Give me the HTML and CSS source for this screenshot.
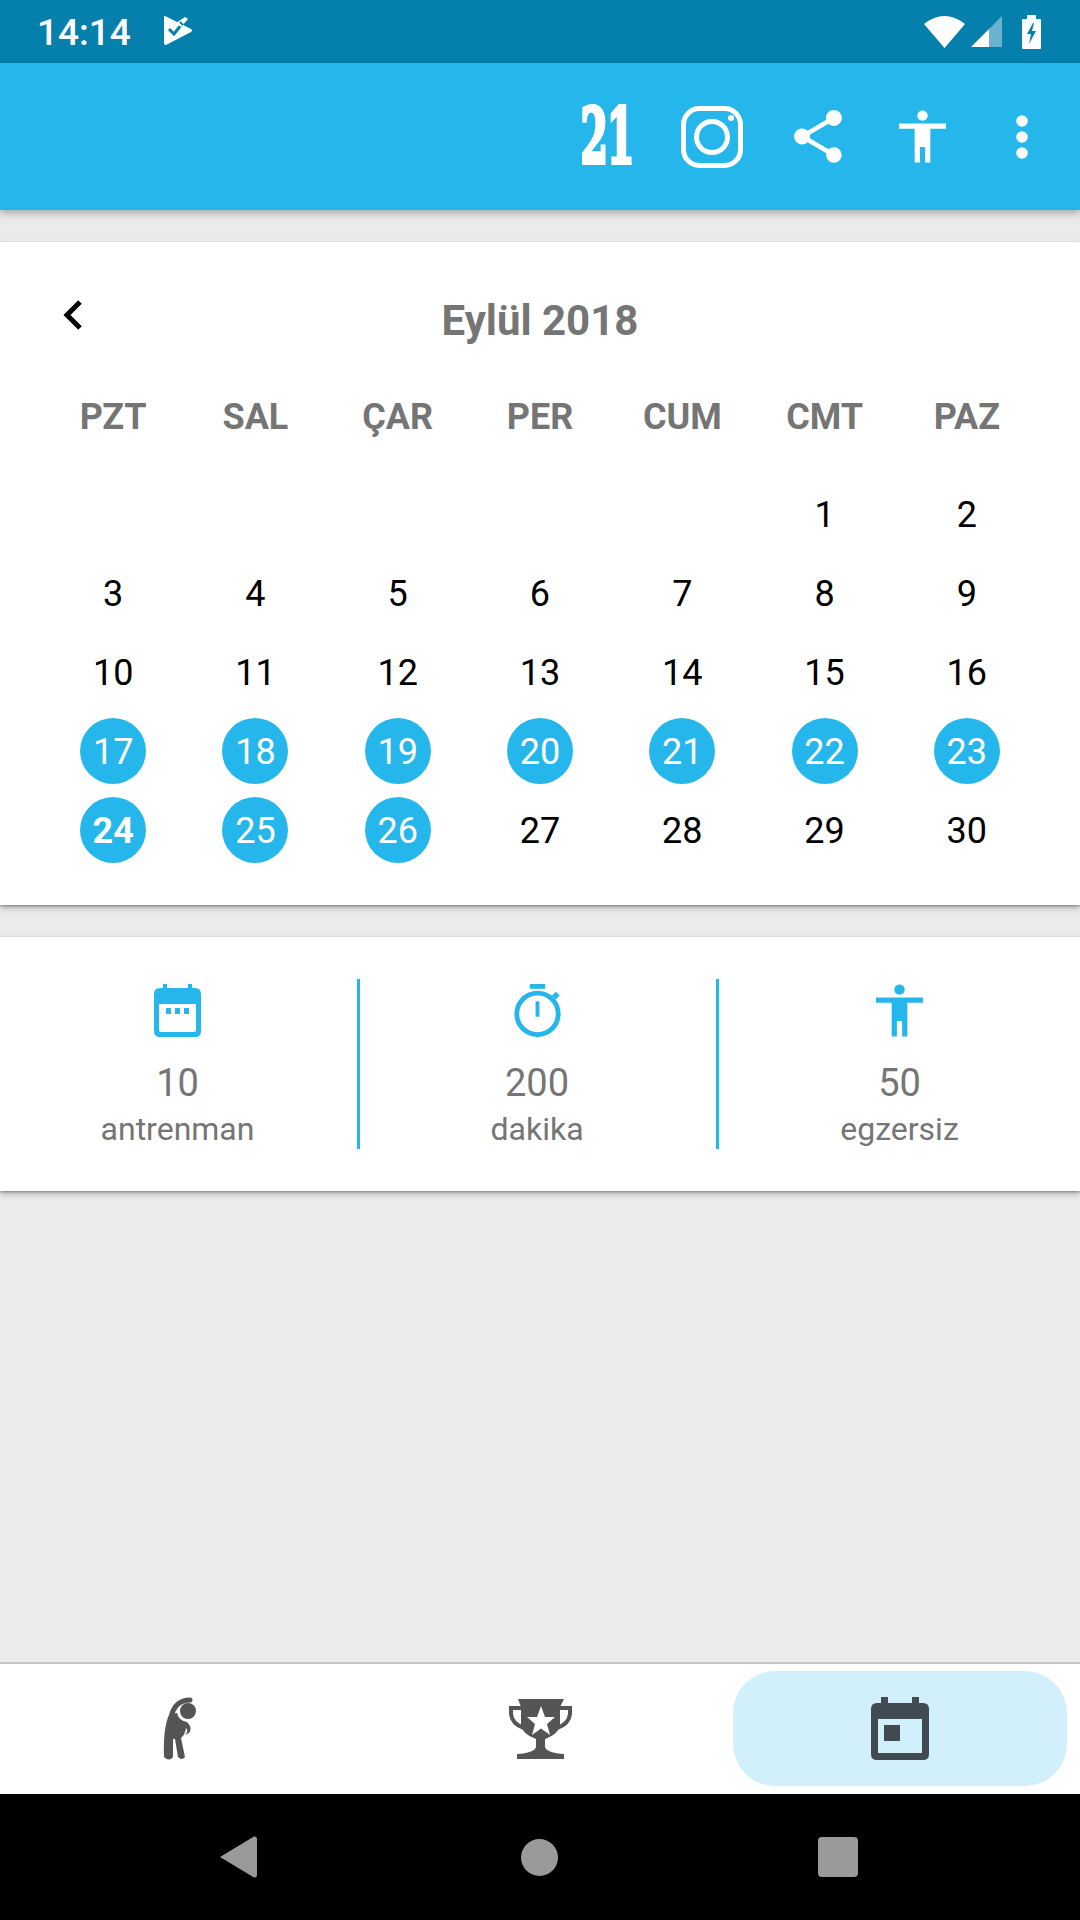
FILE: index.html
```html
<!DOCTYPE html>
<html lang="tr">

<head>
    <meta charset="UTF-8">
    <meta name="viewport" content="width=device-width, initial-scale=1.0">
    <title>Takvim</title>
    <link rel="stylesheet" href="styles.css">
</head>

<body>
    <div class="statusbar">
        <div class="status-left">
            <span class="time">14:14</span>
            <svg class="status-app" viewBox="0 0 28 29">
                <path d="M1 0 L27 13 Q29 14.500 27 16 L2 29 Q0 29 0 27 V1 Q0 0 1 0Z" fill="#fff" />
                <path d="M5 13 L10 18 L17 9" fill="none" stroke="#0580ad" stroke-width="3" />
                <path d="M12 7 L21 1 L24 3 L17 11Z" fill="#fff" />
                <path d="M19 9 L16 6" fill="none" stroke="#0580ad" stroke-width="2" />
            </svg>
        </div>
        <div class="status-right">
            <svg class="wifi" viewBox="0 0 41 32">
                <path d="M20.500 32 L0 8 Q20.500 -8 41 8Z" fill="#fff" />
            </svg>
            <svg class="signal" viewBox="0 0 31 31">
                <path d="M0 31 L18 13 V31Z" fill="#fff" />
                <path d="M18 31 V13 L31 0 V31Z" fill="#fff" opacity="0.4" />
            </svg>
            <svg class="battery" viewBox="0 0 19 34">
                <path d="M5 0 H14 V4 H18 Q19 4 19 5 V33 Q19 34 18 34 H1 Q0 34 0 33 V5 Q0 4 1 4 H5Z" fill="#fff" />
                <path d="M11 8 L5 19 H9 L7 29 L14 16 H10 L12 8Z" fill="#0580ad" />
            </svg>
        </div>
    </div>

    <header class="appbar">
        <span class="logo21">21</span>
        <button class="appbar-btn">
            <svg class="ic-insta" viewBox="0 0 62 62">
                <rect x="2.500" y="2.500" width="57" height="57" rx="16" fill="none" stroke="#fff" stroke-width="5" />
                <circle cx="31" cy="31" r="15.500" fill="none" stroke="#fff" stroke-width="5" />
                <circle cx="50" cy="12" r="3" fill="#fff" />
            </svg>
        </button>
        <button class="appbar-btn">
            <svg class="ic-share" viewBox="3 2 18 20">
                <path d="M18 16.080c-.76 0-1.440.3-1.960.77L8.910 12.700c.05-.23.09-.46.09-.7s-.04-.47-.09-.7l7.050-4.110c.54.5 1.250.81 2.040.81 1.660 0 3-1.340 3-3s-1.340-3-3-3-3 1.340-3 3c0 .24.04.47.09.7L8.040 9.810C7.500 9.310 6.790 9 6 9c-1.660 0-3 1.340-3 3s1.340 3 3 3c.79 0 1.500-.31 2.040-.81l7.120 4.160c-.05.21-.08.43-.08.65 0 1.610 1.310 2.920 2.920 2.920 1.610 0 2.920-1.310 2.920-2.920s-1.310-2.920-2.920-2.920z" fill="#fff" />
            </svg>
        </button>
        <button class="appbar-btn">
            <svg class="ic-body" viewBox="3 2 18 20">
                <path d="M12 2c1.100 0 2 .9 2 2s-.9 2-2 2-2-.9-2-2 .9-2 2-2zm9 7h-6v13h-2v-6h-2v6H9V9H3V7h18v2z" fill="#fff" />
            </svg>
        </button>
        <button class="appbar-btn">
            <svg class="ic-more" viewBox="0 0 12 44">
                <circle cx="6" cy="6" r="5.800" fill="#fff" />
                <circle cx="6" cy="22" r="5.800" fill="#fff" />
                <circle cx="6" cy="38" r="5.800" fill="#fff" />
            </svg>
        </button>
    </header>

    <main class="content">
        <section class="card calendar">
            <div class="cal-head">
                <button class="cal-back">
                    <svg viewBox="0 0 22 32">
                        <path d="M18 3 L5 16 L18 29" fill="none" stroke="#000" stroke-width="5" />
                    </svg>
                </button>
                <h1 class="cal-title">Eylül 2018</h1>
            </div>
            <div class="cal-week">
                <span>PZT</span><span>SAL</span><span>ÇAR</span><span>PER</span><span>CUM</span><span>CMT</span><span>PAZ</span>
            </div>
            <div class="cal-days">
                <span></span><span></span><span></span><span></span><span></span>
                <span>1</span><span>2</span>
                <span>3</span><span>4</span><span>5</span><span>6</span><span>7</span><span>8</span><span>9</span>
                <span>10</span><span>11</span><span>12</span><span>13</span><span>14</span><span>15</span><span>16</span>
                <span class="done">17</span><span class="done">18</span><span class="done">19</span><span class="done">20</span><span class="done">21</span><span class="done">22</span><span class="done">23</span>
                <span class="done today">24</span><span class="done">25</span><span class="done">26</span>
                <span>27</span><span>28</span><span>29</span><span>30</span>
            </div>
        </section>

        <section class="card stats">
            <div class="stat">
                <svg class="stat-icon" viewBox="0 0 47 53">
                    <path d="M9 0 H13 V4 H34 V0 H38 V4 H41 Q47 4 47 10 V47 Q47 53 41 53 H6 Q0 53 0 47 V10 Q0 4 6 4 H9Z M5 20 V46 Q5 48 7 48 H40 Q42 48 42 46 V20Z" fill="#25b7ec" fill-rule="evenodd" />
                    <rect x="12" y="24" width="5" height="6" fill="#25b7ec" />
                    <rect x="21" y="24" width="5" height="6" fill="#25b7ec" />
                    <rect x="30" y="24" width="5" height="6" fill="#25b7ec" />
                </svg>
                <div class="stat-num">10</div>
                <div class="stat-label">antrenman</div>
            </div>
            <div class="stat">
                <svg class="stat-icon" viewBox="0 0 48 55">
                    <rect x="16" y="0" width="16" height="5" fill="#25b7ec" />
                    <circle cx="24" cy="31" r="21.500" fill="none" stroke="#25b7ec" stroke-width="5" />
                    <rect x="22" y="18" width="4" height="16" fill="#25b7ec" />
                    <path d="M39 12 L43 8 L47 12 L43 16Z" fill="#25b7ec" />
                </svg>
                <div class="stat-num">200</div>
                <div class="stat-label">dakika</div>
            </div>
            <div class="stat">
                <svg class="stat-icon" viewBox="3 2 18 20">
                    <path d="M12 2c1.100 0 2 .9 2 2s-.9 2-2 2-2-.9-2-2 .9-2 2-2zm9 7h-6v13h-2v-6h-2v6H9V9H3V7h18v2z" fill="#25b7ec" />
                </svg>
                <div class="stat-num">50</div>
                <div class="stat-label">egzersiz</div>
            </div>
        </section>
    </main>

    <nav class="bottomnav">
        <button class="nav-item">
            <svg class="ic-stretch" viewBox="0 0 34 63">
                <circle cx="25" cy="14" r="8" fill="#555" />
                <path d="M27 3 Q12 3 8 20" fill="none" stroke="#555" stroke-width="5" stroke-linecap="round" />
                <path d="M5 20 Q9 16 14 16 Q16 24 24 25 Q30 31 26 36 L22 38 Q26 34 23 31 Q22 38 18 41 L22 60 Q19 64 15 60 L12 42 L10 42 V60 Q6 65 1 60 Q0 34 5 20Z" fill="#555" />
            </svg>
        </button>
        <button class="nav-item">
            <svg class="ic-trophy" viewBox="0 0 63 60">
                <path d="M9 0 H55 L51 8 V26 Q50 35 36 40 V48 Q38 54 55 55 V60 H8 V55 Q25 54 27 48 V40 Q13 35 12 26 V8Z" fill="#555" />
                <path d="M12 9 H2 V15 Q3 25 15 29 M51 9 H61 V15 Q60 25 48 29" fill="none" stroke="#555" stroke-width="4" />
                <path d="M32 7 L36 18 H46 L38 25 L41 36 L32 29.500 L23 36 L26 25 L18 18 H28Z" fill="#fff" />
            </svg>
        </button>
        <button class="nav-item active">
            <svg class="ic-event" viewBox="0 0 58 63">
                <path d="M10 0 H17 V6 H41 V0 H48 V6 H52 Q58 6 58 12 V57 Q58 63 52 63 H6 Q0 63 0 57 V12 Q0 6 6 6 H10Z M7 22 V56 H51 V22Z" fill="#3f4a52" fill-rule="evenodd" />
                <rect x="13" y="28" width="16" height="16" fill="#3f4a52" />
            </svg>
        </button>
    </nav>

    <div class="sysnav">
        <svg class="sys-back" viewBox="0 0 37 42">
            <path d="M0 21 L34 0.500 Q37 0 37 3 V39 Q37 42 34 41.500Z" fill="#9a9a9a" />
        </svg>
        <span class="sys-home"></span>
        <span class="sys-recent"></span>
    </div>
</body>

</html>
```

FILE: styles.css
```css
* {
    box-sizing: border-box;
}

html,
body {
    margin: 0;
    height: 100%;
}

body {
    width: 1080px;
    height: 1920px;
    display: flex;
    flex-direction: column;
    overflow: hidden;
    font-family: Roboto, "Noto Sans", sans-serif;
    background-color: #ebebeb;
}

button {
    border: none;
    background: none;
    padding: 0;
    margin: 0;
    display: flex;
    align-items: center;
    justify-content: center;
}

svg {
    display: block;
}

/* status bar */
.statusbar {
    height: 63px;
    background: #0580ad;
    display: flex;
    justify-content: space-between;
    align-items: center;
    padding: 0 39px 0 37px;
    color: #fff;
}

.status-left {
    display: flex;
    align-items: center;
    gap: 33px;
}

.time {
    font-size: 37px;
    font-weight: 500;
    position: relative;
    top: 1px;
}

.status-app {
    width: 28px;
    height: 29px;
    margin-bottom: 3px;
}

.status-right {
    display: flex;
    align-items: center;
}

.wifi {
    width: 41px;
    height: 32px;
    margin-right: 6px;
}

.signal {
    width: 31px;
    height: 31px;
    margin-right: 20px;
}

.battery {
    width: 19px;
    height: 34px;
}

/* app bar */
.appbar {
    height: 147px;
    background: #25b7ec;
    display: flex;
    align-items: center;
    padding-right: 52px;
    box-shadow: 0 3px 8px rgba(0, 0, 0, 0.3);
    position: relative;
}

.logo21 {
    margin-left: auto;
    margin-right: 49px;
    color: #fff;
    font-family: "DejaVu Serif", serif;
    font-weight: 700;
    font-size: 76px;
    line-height: 58px;
    letter-spacing: -2px;
    transform: scaleX(0.52);
    transform-origin: center;
    width: 50px;
    display: flex;
    justify-content: center;
    -webkit-text-stroke: 4px #fff;
}

.appbar-btn {
    height: 62px;
}

.ic-insta {
    width: 62px;
    height: 62px;
    margin-right: 51px;
}

.ic-share {
    width: 48px;
    height: 53px;
    margin-right: 57px;
}

.ic-body {
    width: 47px;
    height: 53px;
    margin-right: 70px;
}

.ic-more {
    width: 12px;
    height: 44px;
}

/* cards */
.content {
    flex: 1;
    display: flex;
    flex-direction: column;
    gap: 32px;
    padding-top: 32px;
}

.card {
    background: #fff;
    box-shadow: 0 1px 2px rgba(0, 0, 0, 0.3), 0 3px 6px rgba(0, 0, 0, 0.25);
}

.calendar {
    height: 663px;
    padding: 48px 42px 0;
}

.cal-head {
    height: 60px;
    display: flex;
    align-items: center;
    justify-content: center;
    position: relative;
}

.cal-back {
    position: absolute;
    left: 20px;
    top: 9px;
}

.cal-back svg {
    width: 22px;
    height: 32px;
}

.cal-title {
    margin: 0;
    font-size: 42px;
    font-weight: 700;
    color: #757575;
}

.cal-week,
.cal-days {
    display: grid;
    grid-template-columns: repeat(7, 1fr);
    justify-items: center;
    align-items: center;
}

.cal-week {
    height: 60px;
    margin-top: 37px;
    margin-bottom: 27px;
    font-size: 36px;
    font-weight: 700;
    color: #757575;
}

.cal-days {
    grid-auto-rows: 79px;
    font-size: 36px;
    color: #000;
}

.cal-days span {
    width: 66px;
    height: 66px;
    padding-top: 3px;
    display: flex;
    align-items: center;
    justify-content: center;
}

.cal-days .done {
    background: #25b7ec;
    color: #fff;
    border-radius: 50%;
}

.cal-days .today {
    font-weight: 700;
}

/* stats */
.stats {
    height: 254px;
    display: flex;
    align-items: center;
}

.stat {
    width: 360px;
    height: 170px;
    padding-right: 2px;
    display: flex;
    flex-direction: column;
    align-items: center;
    border-right: 3px solid #25b7ec;
    color: #757575;
}

.stat:nth-child(2) {
    width: 359px;
}

.stat:last-child {
    flex: 1;
    padding-right: 0;
    border-right: none;
}

.stat-icon {
    width: 47px;
    height: 53px;
    margin-top: 5px;
}

.stat-num {
    font-size: 38px;
    line-height: 44px;
    margin-top: 24px;
}

.stat-label {
    font-size: 32px;
    line-height: 40px;
    margin-top: 4px;
}

/* bottom nav */
.bottomnav {
    height: 132px;
    background: #fff;
    border-top: 2px solid #c8c8c8;
    display: flex;
    padding: 7px 0 8px;
}

.nav-item {
    flex: none;
    width: 360px;
    height: 115px;
}

.nav-item.active {
    width: 334px;
    background: #d2f0fb;
    border-radius: 42px;
    margin: 0 13px;
}

.ic-stretch {
    width: 34px;
    height: 63px;
}

.ic-trophy {
    width: 63px;
    height: 60px;
}

.ic-event {
    width: 58px;
    height: 63px;
}

/* system nav */
.sysnav {
    height: 126px;
    background: #000;
    display: grid;
    grid-template-columns: 1fr 1fr 1fr;
    justify-items: center;
    align-items: center;
}

.sys-back {
    width: 37px;
    height: 42px;
    margin-left: 117px;
}

.sys-home {
    width: 37px;
    height: 37px;
    border-radius: 50%;
    background: #9a9a9a;
    margin-right: 2px;
}

.sys-recent {
    width: 40px;
    height: 40px;
    border-radius: 4px;
    background: #9a9a9a;
    margin-right: 124px;
}
```
